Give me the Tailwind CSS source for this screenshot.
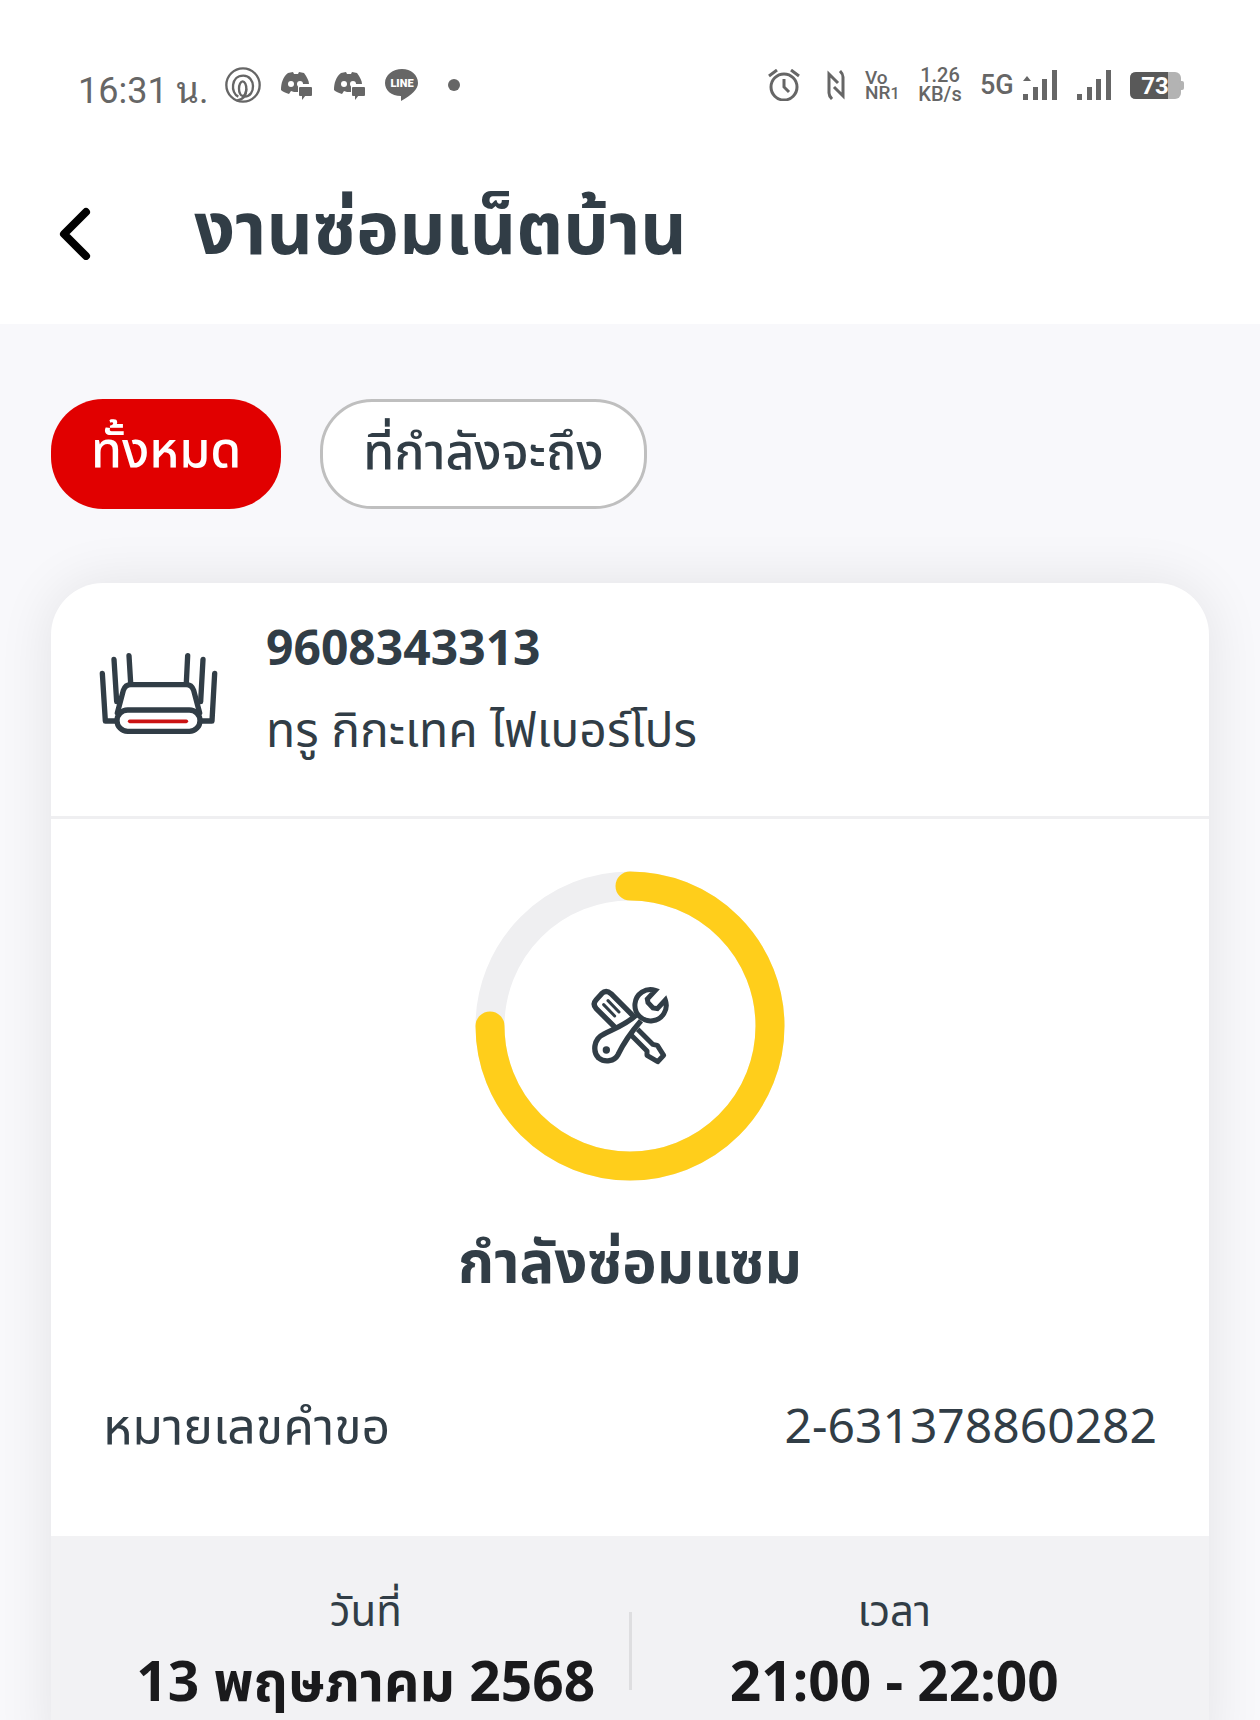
<!DOCTYPE html>
<html lang="th">
<head>
    <meta charset="UTF-8">
    <meta name="viewport" content="width=device-width, initial-scale=1.0">
    <title>งานซ่อมเน็ตบ้าน</title>
    <script src="https://cdn.jsdelivr.net/npm/@tailwindcss/browser@4"></script>
    <style>
        body { font-family: 'Noto Sans', 'Noto Sans Thai', sans-serif; }
    </style>
</head>
<body class="bg-[#f8f8fb] text-[#313d46] min-h-screen overflow-x-hidden">
    <!-- Status bar -->
    <div class="bg-white h-[170px] pl-[78px] pr-[76px] flex items-center justify-between text-[#666] font-['Roboto','Noto_Sans_Thai_Looped','Noto_Sans_Thai',sans-serif]">
        <div class="flex items-center">
            <span class="text-[36px] leading-10 w-[147px] pt-3 whitespace-nowrap">16:31 น.</span>
            <svg class="w-9 h-9" viewBox="15 18 108 108" fill="none" stroke="currentColor" stroke-width="7">
                <circle cx="69" cy="72" r="50"/>
                <ellipse cx="68" cy="83" rx="11" ry="22"/>
                <path d="M55 107C31 96 32 44 70 44C108 44 108 106 74 107"/>
                <path d="M50 119C70 116 79 102 79 83"/>
            </svg>
            <svg class="ml-[19px] w-8 h-8" viewBox="0 0 32 32" fill="currentColor">
                <path d="M8 4L13 3L14 5H18L19 3L24 4C27 8 29 12 29 15H20C19 15 18 16 18 17V23H14L11 22L9 25C5 24 2 22 1 21C1 14 3 8 8 4Z"/>
                <circle cx="11" cy="15" r="3" fill="white"/>
                <circle cx="20" cy="15" r="3" fill="white"/>
                <rect x="19" y="18" width="13" height="9" rx="1"/>
                <path d="M22 26V31L26 26Z"/>
            </svg>
            <svg class="ml-[21px] w-8 h-8" viewBox="0 0 32 32" fill="currentColor">
                <path d="M8 4L13 3L14 5H18L19 3L24 4C27 8 29 12 29 15H20C19 15 18 16 18 17V23H14L11 22L9 25C5 24 2 22 1 21C1 14 3 8 8 4Z"/>
                <circle cx="11" cy="15" r="3" fill="white"/>
                <circle cx="20" cy="15" r="3" fill="white"/>
                <rect x="19" y="18" width="13" height="9" rx="1"/>
                <path d="M22 26V31L26 26Z"/>
            </svg>
            <svg class="ml-5 w-[34px] h-8" viewBox="0 0 34 32" fill="currentColor">
                <path d="M17 0C26 0 33 6 33 14C33 20 27 26 16 32V27C6 27 0 21 0 14C0 6 8 0 17 0Z"/>
                <text x="17" y="18" text-anchor="middle" font-family="Roboto" font-size="11" font-weight="900" fill="white">LINE</text>
            </svg>
            <span class="ml-[29px] w-3 h-3 rounded-full bg-[#666]"></span>
        </div>
        <div class="flex items-center">
            <svg class="w-8 h-8" viewBox="0 0 32 32" fill="none" stroke="currentColor" stroke-width="3">
                <circle cx="16" cy="18" r="13"/>
                <path d="M16 10V18L21 23M1 7L9 1M31 7L23 1"/>
            </svg>
            <svg class="ml-[27px] w-[18px] h-[30px]" viewBox="0 0 18 30" fill="none" stroke="currentColor" stroke-width="3">
                <path d="M5 29C3 27 2 26 2 23V4L11 13M13 1C15 3 16 4 16 7V26L7 17"/>
            </svg>
            <p class="ml-[20px] w-9 text-[19px] leading-[15px] font-medium whitespace-nowrap">Vo<br>NR<span class="text-[16px]">1</span></p>
            <p class="ml-[17px] w-11 text-[20px] leading-[19px] text-center font-medium">1.26<br>KB/s</p>
            <span class="ml-[18px] w-[33px] text-[27px] leading-8 font-medium whitespace-nowrap">5G</span>
            <svg class="ml-[10px] w-[34px] h-[30px]" viewBox="0 0 34 30" fill="currentColor">
                <path d="M0 11L4 6L8 11ZM0 24H5V30H0ZM10 17H15V30H10ZM19 9H24V30H19ZM29 0H34V30H29Z"/>
            </svg>
            <svg class="ml-5 w-[34px] h-[30px]" viewBox="0 0 34 30" fill="currentColor">
                <path d="M0 24H5V30H0ZM10 17H15V30H10ZM19 9H24V30H19ZM29 0H34V30H29Z"/>
            </svg>
            <svg class="ml-[19px] w-[54px] h-7" viewBox="0 0 54 28">
                <rect x="0" y="1" width="51" height="27" rx="6" fill="#b3b3b3"/>
                <rect x="49" y="10" width="5" height="9" rx="2" fill="#b3b3b3"/>
                <path d="M6 1H38V28H6Q0 28 0 22V7Q0 1 6 1Z" fill="#595959"/>
                <text x="25" y="23" text-anchor="middle" font-family="Roboto" font-size="24" font-weight="700" fill="white">73</text>
            </svg>
        </div>
    </div>

    <!-- Header -->
    <header class="bg-white h-[154px] px-14 flex items-start">
        <button aria-label="กลับ" class="w-9 h-[62px] mt-8 flex items-center">
            <svg class="w-9 h-[54px]" viewBox="0 0 36 54" fill="none" stroke="black" stroke-width="8" stroke-linecap="round" stroke-linejoin="round">
                <path d="M30 6L8 28L30 50"/>
            </svg>
        </button>
        <h1 class="ml-[102px] mt-2 text-[72px] leading-[96px] font-bold whitespace-nowrap">งานซ่อมเน็ตบ้าน</h1>
    </header>

    <main class="px-[51px] pt-[75px]">
        <!-- Filters -->
        <div class="flex gap-[39px] text-[50px] leading-[96px] font-medium">
            <button class="h-[110px] px-10 pb-3 rounded-[52px] bg-[#e10000] text-white whitespace-nowrap">ทั้งหมด</button>
            <button class="h-[110px] px-10 pb-3 rounded-[52px] bg-white border-3 border-[#bfbfbf] whitespace-nowrap">ที่กำลังจะถึง</button>
        </div>

        <!-- Repair job card -->
        <section class="mt-[74px] bg-white rounded-t-[52px] overflow-hidden shadow-[0_0_56px_rgba(0,0,0,0.09)]">
            <div class="h-[236px] px-[47px] pt-[34px] flex border-b-3 border-[#efeff1]">
                <svg class="mt-[34px] w-[120px] h-[84px] shrink-0" viewBox="54 60 360 252" fill="none" stroke="#313d46" stroke-width="16" stroke-linecap="round" stroke-linejoin="round">
                    <path d="M67 127L76 270H104M102 85L110 212H116M147 74L152 156M323 74L319 156M369 85L362 212H355M404 127L396 270H366"/>
                    <path d="M112 246L130 178Q136 161 152 161H319Q335 161 341 178L359 246"/>
                    <rect x="111" y="237" width="249" height="64" rx="32"/>
                    <path d="M149 271H319" stroke="#cb1212" stroke-width="11"/>
                </svg>
                <div class="ml-12">
                    <p class="text-[48px] leading-[60px] font-bold">9608343313</p>
                    <p class="mt-3 text-[48px] leading-[80px] whitespace-nowrap">ทรู กิกะเทค ไฟเบอร์โปร</p>
                </div>
            </div>

            <div class="pt-[52px] flex flex-col items-center">
                <svg class="w-[310px] h-[310px]" viewBox="0 0 310 310" fill="none">
                    <circle cx="155" cy="155" r="140" stroke="#efeff1" stroke-width="29"/>
                    <path d="M155 15A140 140 0 1 1 15 155" stroke="#ffce1b" stroke-width="29" stroke-linecap="round"/>
                    <svg x="115" y="115" width="80" height="80" viewBox="60 80 240 240" stroke="#313d46" stroke-width="16" stroke-linejoin="round">
                        <!-- screwdriver -->
                        <path d="M136 205L78 147Q67 134 78 122L95 103Q108 90 123 103L188 168"/>
                        <path d="M114 124L147 158M101 136L134 170" stroke-width="9" stroke-linecap="round"/>
                        <path d="M184 228L231 275V288L263 307L281 288L262 258L248 255L203 210" stroke-width="15"/>
                        <!-- wrench -->
                        <path d="M198 168C165 198 128 210 100 225C70 239 68 278 86 296C105 311 133 306 144 286C161 250 180 222 213 184" fill="white"/>
                        <path d="M256 93A47 47 0 1 0 286 122L262 148L249 146L234 130L232 119Z" fill="white" stroke-width="15" stroke-linejoin="miter"/>
                        <circle cx="109" cy="272" r="11" fill="#313d46" stroke="none"/>
                    </svg>
                </svg>
                <h2 class="mt-10 text-[58px] leading-[80px] font-bold whitespace-nowrap">กำลังซ่อมแซม</h2>
            </div>

            <div class="mt-23 h-[143px] px-[52px] flex items-start justify-between text-[48px] leading-[64px] whitespace-nowrap">
                <span class="text-[50px]">หมายเลขคำขอ</span>
                <span>2-631378860282</span>
            </div>

            <!-- Appointment -->
            <div class="bg-[#f2f2f4] px-[52px] pt-11 pb-12 flex text-center whitespace-nowrap">
                <div class="flex-1">
                    <p class="text-[42px] leading-[60px]">วันที่</p>
                    <p class="mt-2 text-[55px] leading-[64px] font-bold text-[#1a1a1c]">13 พฤษภาคม 2568</p>
                </div>
                <div class="w-[3px] h-[78px] mt-8 bg-[#dedee0]"></div>
                <div class="flex-1">
                    <p class="text-[42px] leading-[60px]">เวลา</p>
                    <p class="mt-2 text-[55px] leading-[64px] font-bold text-[#1a1a1c]">21:00 - 22:00</p>
                </div>
            </div>
        </section>
    </main>
</body>
</html>
